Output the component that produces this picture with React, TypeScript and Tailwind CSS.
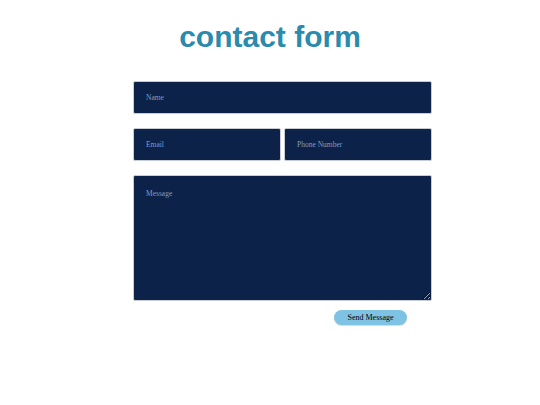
import React from "react";

export default function App() {
  return (
    <div className="w-[540px] h-[405px] bg-white flex flex-col">
      <h1 className="text-center text-[30px] leading-none font-bold text-[#2a8bad] pt-[22px] font-['Liberation_Sans',Arial,sans-serif]">
        contact form
      </h1>
      <form className="ml-[133px] w-[299px] mt-[29px] flex flex-col font-['Liberation_Serif','Times_New_Roman',serif]">
        <input
          placeholder="Name"
          className="block h-[33px] w-full bg-[#0c2249] border border-[#c8ccd4] rounded-[2px] px-[12px] text-[7.5px] text-[#8aa6d0] placeholder:text-[#7f9dcb] outline-none"
        />
        <div className="flex gap-[3px] mt-[14px]">
          <input
            placeholder="Email"
            className="block h-[33px] w-[148px] bg-[#0c2249] border border-[#c8ccd4] rounded-[2px] px-[12px] text-[7.5px] text-[#8aa6d0] placeholder:text-[#7f9dcb] outline-none"
          />
          <input
            placeholder="Phone Number"
            className="block h-[33px] w-[148px] bg-[#0c2249] border border-[#c8ccd4] rounded-[2px] px-[12px] text-[7.5px] text-[#8aa6d0] placeholder:text-[#7f9dcb] outline-none"
          />
        </div>
        <textarea
          placeholder="Message"
          className="block h-[126px] w-full mt-[14px] bg-[#0c2249] border border-[#c8ccd4] rounded-[2px] px-[12px] pt-[12px] text-[7.5px] text-[#8aa6d0] placeholder:text-[#7f9dcb] outline-none"
        />
        <div className="flex mt-[9px] pl-[201px]">
          <button
            type="button"
            className="w-[73px] h-[15px] rounded-full bg-[#7fc3e4] text-[8px] text-black leading-none shadow-[0_1px_1px_rgba(0,0,0,0.15)]"
          >
            Send Message
          </button>
        </div>
      </form>
    </div>
  );
}
